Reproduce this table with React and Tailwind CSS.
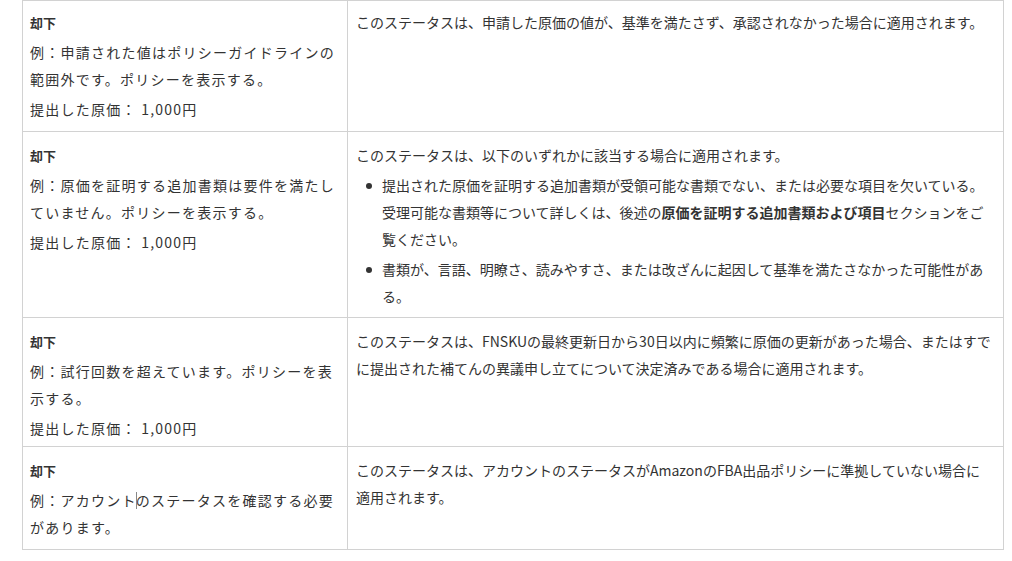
import React from "react";

const font = {
  fontFamily: '"Noto Sans CJK JP", "Noto Sans", sans-serif',
};

const rows = [
  {
    pad: "pt-[8px] pb-[8px]",
    example: ["例：申請された値はポリシーガイドラインの", "範囲外です。ポリシーを表示する。"],
    cost: true,
    detail: (
      <p>このステータスは、申請した原価の値が、基準を満たさず、承認されなかった場合に適用されます。</p>
    ),
  },
  {
    pad: "pt-[10px] pb-[7px]",
    example: ["例：原価を証明する追加書類は要件を満たし", "ていません。ポリシーを表示する。"],
    cost: true,
    detail: (
      <>
        <p>このステータスは、以下のいずれかに該当する場合に適用されます。</p>
        <ul>
          <li className="mt-[3px] flex">
            <span className="mt-[11px] ml-[10px] mr-[10px] h-[6px] w-[6px] shrink-0 rounded-full bg-[#333]" />
            <span>
              提出された原価を証明する追加書類が受領可能な書類でない、または必要な項目を欠いている。
              <br />
              受理可能な書類等について詳しくは、後述の
              <b className="font-bold">原価を証明する追加書類および項目</b>
              セクションをご
              <br />
              覧ください。
            </span>
          </li>
          <li className="mt-[3px] flex">
            <span className="mt-[11px] ml-[10px] mr-[10px] h-[6px] w-[6px] shrink-0 rounded-full bg-[#333]" />
            <span>
              書類が、言語、明瞭さ、読みやすさ、または改ざんに起因して基準を満たさなかった可能性があ
              <br />
              る。
            </span>
          </li>
        </ul>
      </>
    ),
  },
  {
    pad: "pt-[10px] pb-[4px]",
    example: ["例：試行回数を超えています。ポリシーを表", "示する。"],
    cost: true,
    detail: (
      <p>
        このステータスは、FNSKUの最終更新日から30日以内に頻繁に原価の更新があった場合、またはすで
        <br />
        に提出された補てんの異議申し立てについて決定済みである場合に適用されます。
      </p>
    ),
  },
  {
    pad: "pt-[10px] pb-[8px]",
    example: ["例：アカウントのステータスを確認する必要", "があります。"],
    cost: false,
    caret: true,
    detail: (
      <p>
        このステータスは、アカウントのステータスがAmazonのFBA出品ポリシーに準拠していない場合に
        <br />
        適用されます。
      </p>
    ),
  },
];

const App = () => {
  return (
    <div className="min-h-[561px] w-full bg-white" style={font}>
      <table className="ml-[22px] w-[982px] border-collapse text-[14px] leading-[27px] text-[#333]">
        <tbody>
          {rows.map((row, idx) => (
            <tr key={idx}>
              <td className={`w-[325px] border border-[#d2d2d2] pl-[7px] pr-[6px] align-top ${row.pad}`}>
                <p className="text-[13px] font-bold">却下</p>
                <p className="mt-[3px] tracking-[1.25px]">
                  {row.caret ? (
                    <>
                      例：アカウント
                      <span className="mx-[-1px] inline-block h-[17px] w-px translate-y-[3px] bg-[#888]" />
                      のステータスを確認する必要
                    </>
                  ) : (
                    row.example[0]
                  )}
                  <br />
                  {row.example[1]}
                </p>
                {row.cost && <p className="mt-[3px] tracking-[1.25px]">提出した原価： 1,000円</p>}
              </td>
              <td className={`border border-[#d2d2d2] pl-[8px] pr-[8px] align-top ${row.pad}`}>
                {row.detail}
              </td>
            </tr>
          ))}
        </tbody>
      </table>
    </div>
  );
};

export default App;
